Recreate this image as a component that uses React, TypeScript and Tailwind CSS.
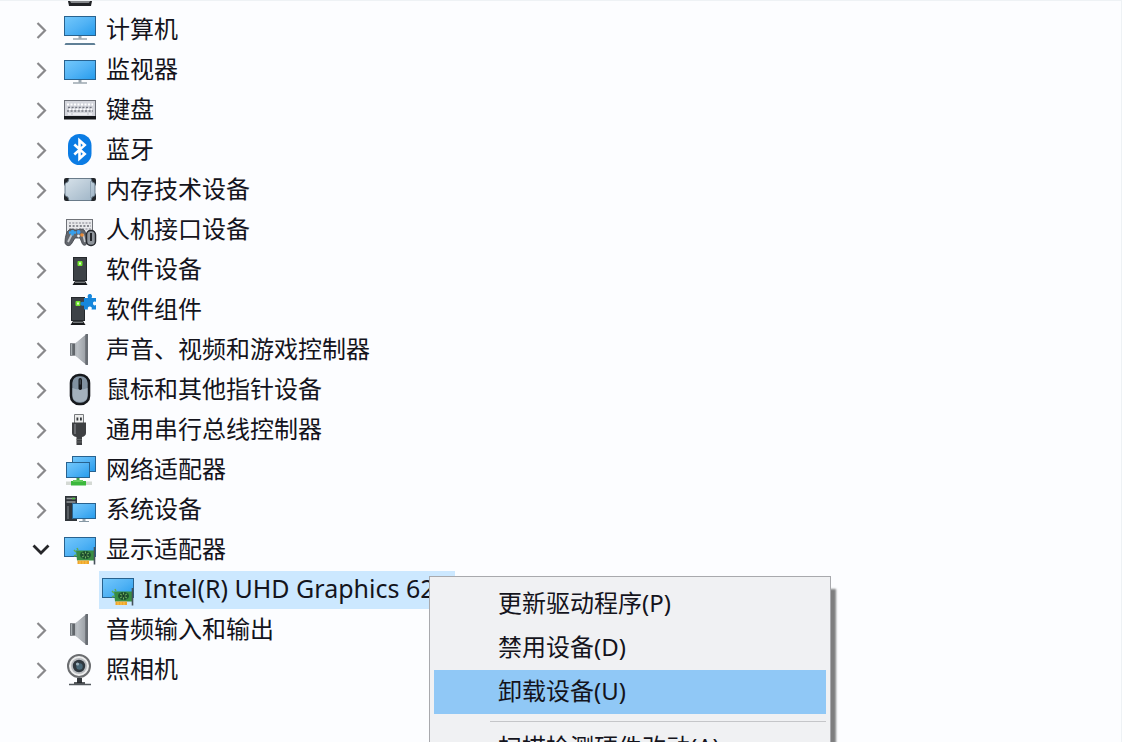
import { useState, type ReactNode } from "react";

function Glyph({ children }: { children: ReactNode }) {
  return (
    <svg viewBox="0 0 32 32" className="size-8 shrink-0 overflow-visible" aria-hidden="true">
      <defs>
        <linearGradient id="screen" x1="0" y1="0" x2="1" y2="1">
          <stop offset="0" stopColor="#74c8fb" />
          <stop offset="0.5" stopColor="#52b3f5" />
          <stop offset="1" stopColor="#259bec" />
        </linearGradient>
        <linearGradient id="metal" x1="0" y1="0" x2="1" y2="0">
          <stop offset="0" stopColor="#5f6469" />
          <stop offset="0.45" stopColor="#c3c8cc" />
          <stop offset="1" stopColor="#7d8288" />
        </linearGradient>
        <linearGradient id="plate" x1="0" y1="0" x2="1" y2="1">
          <stop offset="0" stopColor="#d7e2ea" />
          <stop offset="1" stopColor="#9eb4c6" />
        </linearGradient>
      </defs>
      {children}
    </svg>
  );
}

function Screen({ x, y, w, h }: { x: number; y: number; w: number; h: number }) {
  return <rect x={x + 0.5} y={y + 0.5} width={w - 1} height={h - 1} fill="url(#screen)" stroke="#28628f" />;
}

function Stand({ y }: { y: number }) {
  return (
    <>
      <path d={`M14.5 ${y}h3v2.5h-3z`} fill="#9aa7b0" />
      <path d={`M9 ${y + 3}h14`} stroke="#84929c" strokeWidth="1.2" />
    </>
  );
}

const ComputerIcon = () => (
  <Glyph>
    <Screen x={0} y={3} w={32} h={20} />
    <Stand y={23} />
    <path d="M1.5 30h29l1 2H.5z" fill="#5f7f96" />
  </Glyph>
);

const MonitorIcon = () => (
  <Glyph>
    <Screen x={0} y={7} w={32} h={20} />
    <Stand y={27} />
  </Glyph>
);

const KeyboardIcon = () => (
  <Glyph>
    <rect x="0.5" y="7.5" width="31" height="17" fill="#d3d5dc" stroke="#6d7078" />
    <path d="M3 11.5h26" stroke="#fff" strokeWidth="2" strokeDasharray="2 1.5" />
    <path d="M4 14.5h24M3 18h26" stroke="#777a83" strokeWidth="1.4" strokeDasharray="2 1.6" />
    <path d="M5 16.2h23" stroke="#fff" strokeWidth="1.6" strokeDasharray="2 1.6" />
    <path d="M4 21h3M9 21h14M25 21h3" stroke="#f4f4f6" strokeWidth="1.6" />
    <path d="M0 23h32v3.5H0z" fill="#15171b" />
  </Glyph>
);

const BluetoothIcon = () => (
  <Glyph>
    <rect x="4" y="1" width="23.5" height="31" rx="11.5" fill="#0b7ce4" />
    <path d="M10.3 11.5l10.4 9.4-5.2 4.6V7.5l5.2 4.6L10.3 21.5" fill="none" stroke="#fff" strokeWidth="2.6" />
  </Glyph>
);

const MemoryIcon = () => (
  <Glyph>
    <rect x="0" y="5" width="8" height="8" rx="2" fill="#22262b" />
    <rect x="24" y="5" width="8" height="8" rx="2" fill="#22262b" />
    <rect x="0" y="20" width="8" height="8" rx="2" fill="#22262b" />
    <rect x="24" y="20" width="8" height="8" rx="2" fill="#22262b" />
    <path d="M5 5.5h22q0 4 4 5v12q-4 1-4 5H5q0-4-4-5v-12q4-1 4-5z" fill="url(#plate)" stroke="#697b8a" />
    <path d="M26.5 8v17" stroke="#8fa3b4" />
  </Glyph>
);

const InputIcon = () => (
  <Glyph>
    <rect x="2.5" y="6.5" width="26" height="14" fill="#e8e9ec" stroke="#707379" />
    <path d="M5 10h22M5 16h22" stroke="#a1a3aa" strokeWidth="1.5" strokeDasharray="2 1.3" />
    <path d="M5 13h22" stroke="#676a72" strokeWidth="1.5" strokeDasharray="2 1.6" />
    <path
      d="M5 17c3-2 5 0 7 0s5-2 8 0c2 2 3 8 3 13-1 3-4 3-5 0l-2-5h-5l-3 5c-2 4-6 3-7 0 0-5 1-11 4-13z"
      fill="#62666d"
      stroke="#3c3f45"
      strokeWidth="0.8"
    />
    <path d="M4 29l4-8M19 21l2 8" stroke="#c3c6ca" strokeWidth="1.8" />
    <path d="M5 19.5h7M8.5 17v5.5" stroke="#36a0ed" strokeWidth="2.6" />
    <circle cx="14.5" cy="19" r="2" fill="#3d9df0" />
    <circle cx="18" cy="22" r="1.8" fill="#e98b37" />
    <circle cx="14.5" cy="23" r="1.4" fill="#eceef0" />
    <rect x="22.5" y="17.5" width="9" height="15" rx="4.3" fill="#8f959c" stroke="#26292e" strokeWidth="1.5" />
    <path d="M27 20v8" stroke="#22252a" strokeWidth="2" />
  </Glyph>
);

const Tower = ({ x }: { x: number }) => (
  <g transform={`translate(${x} 0)`}>
    <rect x="0.5" y="4.5" width="13" height="23" fill="#3d4247" stroke="#24282c" />
    <path d="M2 28h10l2.5 4h-15z" fill="#17191c" />
    <path d="M2 29.2h10" stroke="#9da2a6" />
    <rect x="4.5" y="8" width="5" height="5" rx="1" fill="#6fe22e" />
    <rect x="6" y="9.5" width="2" height="2" fill="#e1ffd0" />
  </g>
);

const SoftwareIcon = () => (
  <Glyph>
    <Tower x={9} />
  </Glyph>
);

const ComponentIcon = () => (
  <Glyph>
    <Tower x={7} />
    <path
      d="M20 5h4c-1-2 0-4 1.8-4s3 2 1.7 4H32v4c-2-1-3 0-3 1.5s1 2.5 3 1.5v4.5h-4.5c1-2-.2-3-1.700-3s-2.5 1-1.8 3h-4v-4c-2 .8-3.5 0-3.5-1.7s1.5-2.6 3.5-1.8z"
      fill="#1687dc"
    />
  </Glyph>
);

const SpeakerIcon = () => (
  <Glyph>
    <path d="M6 10.5h5L22 1.5v30L11 22.5H6z" fill="url(#metal)" />
    <path d="M6 10.5h5v12H6z" fill="#62676c" />
    <path d="M7.5 11v11" stroke="#a6acb0" strokeWidth="1.5" />
    <path d="M11 11l10-8v27l-10-8z" fill="#b7bcc1" opacity="0.5" />
    <path d="M21.5 1h2.5v31h-2.5z" fill="#686d73" />
  </Glyph>
);

const MouseIcon = () => (
  <Glyph>
    <rect x="7" y="2" width="18" height="29" rx="8" fill="#8192a1" stroke="#16191d" strokeWidth="2.6" />
    <path d="M8.5 15q7.5 3 15 0v7q0 7-7.5 7t-7.5-7z" fill="#a3b1bd" />
    <rect x="14.5" y="5" width="3.5" height="12" rx="1.7" fill="#15181c" />
    <path d="M16.2 6.5v5" stroke="#4c5760" />
  </Glyph>
);

const UsbIcon = () => (
  <Glyph>
    <path d="M10.5 10V1.5h9V10" fill="#eceded" stroke="#777a7d" />
    <path d="M12.5 4.5h1.8v3h-1.8zM16 4.5h1.8v3H16z" fill="#33363a" />
    <path d="M8 9.5h14V20q0 3-4 4v8h-5.5v-8q-4.5-1-4.5-4z" fill="#3e4043" />
    <path d="M11 11v10" stroke="#77797c" strokeWidth="1.5" />
    <path d="M12.5 26.5H18M12.5 29H18" stroke="#6c6e70" strokeWidth="0.8" />
  </Glyph>
);

const NetworkIcon = () => (
  <Glyph>
    <Screen x={8} y={3} w={24} h={16} />
    <Screen x={2} y={9} w={24} h={16} />
    <path d="M12.5 25h3v3h-3z" fill="#48a34a" />
    <path d="M2 28.5h26v3.500H2z" fill="#d4d9d4" />
    <path d="M7 28h15v4.500H7z" fill="#3cb83d" />
    <path d="M9 27h10v2H9z" fill="#63cc5d" />
  </Glyph>
);

const SystemIcon = () => (
  <Glyph>
    <rect x="1" y="3" width="12" height="25" fill="#30353a" />
    <path d="M2.5 5.5h9M2.5 9h9" stroke="#92989b" strokeWidth="1.5" />
    <path d="M8 5.5h3" stroke="#4fc443" strokeWidth="1.5" />
    <path d="M4 13v13" stroke="#666d72" strokeWidth="1.5" />
    <Screen x={8} y={10} w={24} h={16} />
    <path d="M18.5 26h3v2h-3z" fill="#9aa7b0" />
    <path d="M15 28.5h10" stroke="#8698a5" />
  </Glyph>
);

const DisplayIcon = () => (
  <Glyph>
    <Screen x={0} y={4} w={32} h={20} />
    <path d="M12 17.5h19v10H13z" fill="#398d42" />
    <path d="M12 19l-2-2M12 22l-2 1M14 17l-1-2" stroke="#5eae4e" strokeWidth="1.5" />
    <path d="M30.5 14v17.5" stroke="#45515a" strokeWidth="1.6" />
    <ellipse cx="21.5" cy="22" rx="5.5" ry="4" fill="#1d5130" />
    <path d="M18 20l7 4M18 24l7-4M21.5 18.5v7" stroke="#7ebd66" strokeWidth="0.9" />
    <circle cx="21.5" cy="22" r="1.4" fill="#183b29" />
    <path d="M13.5 27.5h11.500v3.500H13.500z" fill="#efa52a" />
    <path d="M16 28v3M19 28v3M22 28v3" stroke="#ffd15b" strokeWidth="0.8" />
  </Glyph>
);

const CameraIcon = () => (
  <Glyph>
    <path d="M13 25h5v5h-5z" fill="#33373b" />
    <path d="M5 31.5h22" stroke="#50565b" strokeWidth="1.5" />
    <path d="M10 30h11" stroke="#24282c" strokeWidth="1.5" />
    <circle cx="15" cy="13" r="11" fill="#eceded" stroke="#6b6d70" strokeWidth="2" />
    <circle cx="15" cy="13" r="8" fill="#b8bbbf" />
    <circle cx="15" cy="13" r="6.2" fill="#2f383f" />
    <circle cx="15.5" cy="13.5" r="3.2" fill="#496878" />
    <circle cx="13.5" cy="11" r="1.6" fill="#9cb1bd" />
  </Glyph>
);

type Device = { name: string; icon: () => ReactNode; children?: string[] };

const devices: Device[] = [
  { name: "计算机", icon: ComputerIcon },
  { name: "监视器", icon: MonitorIcon },
  { name: "键盘", icon: KeyboardIcon },
  { name: "蓝牙", icon: BluetoothIcon },
  { name: "内存技术设备", icon: MemoryIcon },
  { name: "人机接口设备", icon: InputIcon },
  { name: "软件设备", icon: SoftwareIcon },
  { name: "软件组件", icon: ComponentIcon },
  { name: "声音、视频和游戏控制器", icon: SpeakerIcon },
  { name: "鼠标和其他指针设备", icon: MouseIcon },
  { name: "通用串行总线控制器", icon: UsbIcon },
  { name: "网络适配器", icon: NetworkIcon },
  { name: "系统设备", icon: SystemIcon },
  { name: "显示适配器", icon: DisplayIcon, children: ["Intel(R) UHD Graphics 620"] },
  { name: "音频输入和输出", icon: SpeakerIcon },
  { name: "照相机", icon: CameraIcon },
];

function Chevron({ open }: { open: boolean }) {
  return (
    <svg viewBox="0 0 18 18" className="size-[18px] overflow-visible" fill="none" aria-hidden="true">
      {open ? (
        <path d="M1.500 5.500l7.500 7.500 7.500-7.500" stroke="#26262a" strokeWidth="2.800" />
      ) : (
        <path d="M5.500 3l7.500 7.500-7.500 7.500" stroke="#89898c" strokeWidth="2.200" />
      )}
    </svg>
  );
}

function DeviceNode({ device }: { device: Device }) {
  const [open, setOpen] = useState(Boolean(device.children));
  const Icon = device.icon;
  return (
    <li role="treeitem" aria-expanded={open}>
      <div className="flex h-10 items-center">
        <button
          type="button"
          aria-label={device.name}
          onClick={() => setOpen(!open)}
          className="mr-[14px] flex size-[18px] items-center justify-center"
        >
          <Chevron open={open} />
        </button>
        <Icon />
        <span className="ml-[10px] whitespace-nowrap">{device.name}</span>
      </div>
      {open && device.children && (
        <ul role="group" className="pl-[67px]">
          {device.children.map((name) => (
            <li key={name} role="treeitem" aria-selected="true" className="flex h-10 items-end">
              <div className="flex h-[38px] w-fit items-center bg-[#cce8ff] pr-1.5 pl-[3px]">
                <Icon />
                <span className="ml-[10px] pb-0.5 text-[25px] whitespace-nowrap">{name}</span>
              </div>
            </li>
          ))}
        </ul>
      )}
    </li>
  );
}

function MenuItem({ label, active = false }: { label: string; active?: boolean }) {
  return (
    <button
      type="button"
      role="menuitem"
      className={`flex h-11 w-full items-center pb-0.5 pl-16 text-left whitespace-nowrap ${active ? "bg-[#90c8f6]" : ""}`}
    >
      {label}
    </button>
  );
}

export default function App() {
  return (
    <main className="relative h-screen overflow-hidden border-t border-r border-[#eef2f5] bg-[#fcfdff] font-['Noto_Sans','Noto_Sans_CJK_SC',sans-serif] text-2xl text-[#14141c]">
      <div className="flex h-2 items-start pl-16">
        <svg viewBox="0 0 32 5" className="h-[5px] w-8" aria-hidden="true">
          <path d="M4 0h24l-1 5H5z" fill="#202226" />
          <path d="M6 0h20l-1 2H7z" fill="#85888c" />
        </svg>
      </div>
      <ul role="tree" className="pl-8">
        {devices.map((device) => (
          <DeviceNode key={device.name} device={device} />
        ))}
      </ul>
      <div
        role="menu"
        className="absolute top-[575px] left-[429px] w-[402px] border border-[#a8a9ad] bg-[#f0f1f3] px-1 py-[5px] shadow-[5px_13px_2px_rgba(0,0,0,0.5)]"
      >
        <MenuItem label="更新驱动程序(P)" />
        <MenuItem label="禁用设备(D)" />
        <MenuItem label="卸载设备(U)" active />
        <hr className="mt-[7px] mb-1 ml-14 border-[#c5c6c9]" />
        <MenuItem label="扫描检测硬件改动(A)" />
      </div>
    </main>
  );
}
